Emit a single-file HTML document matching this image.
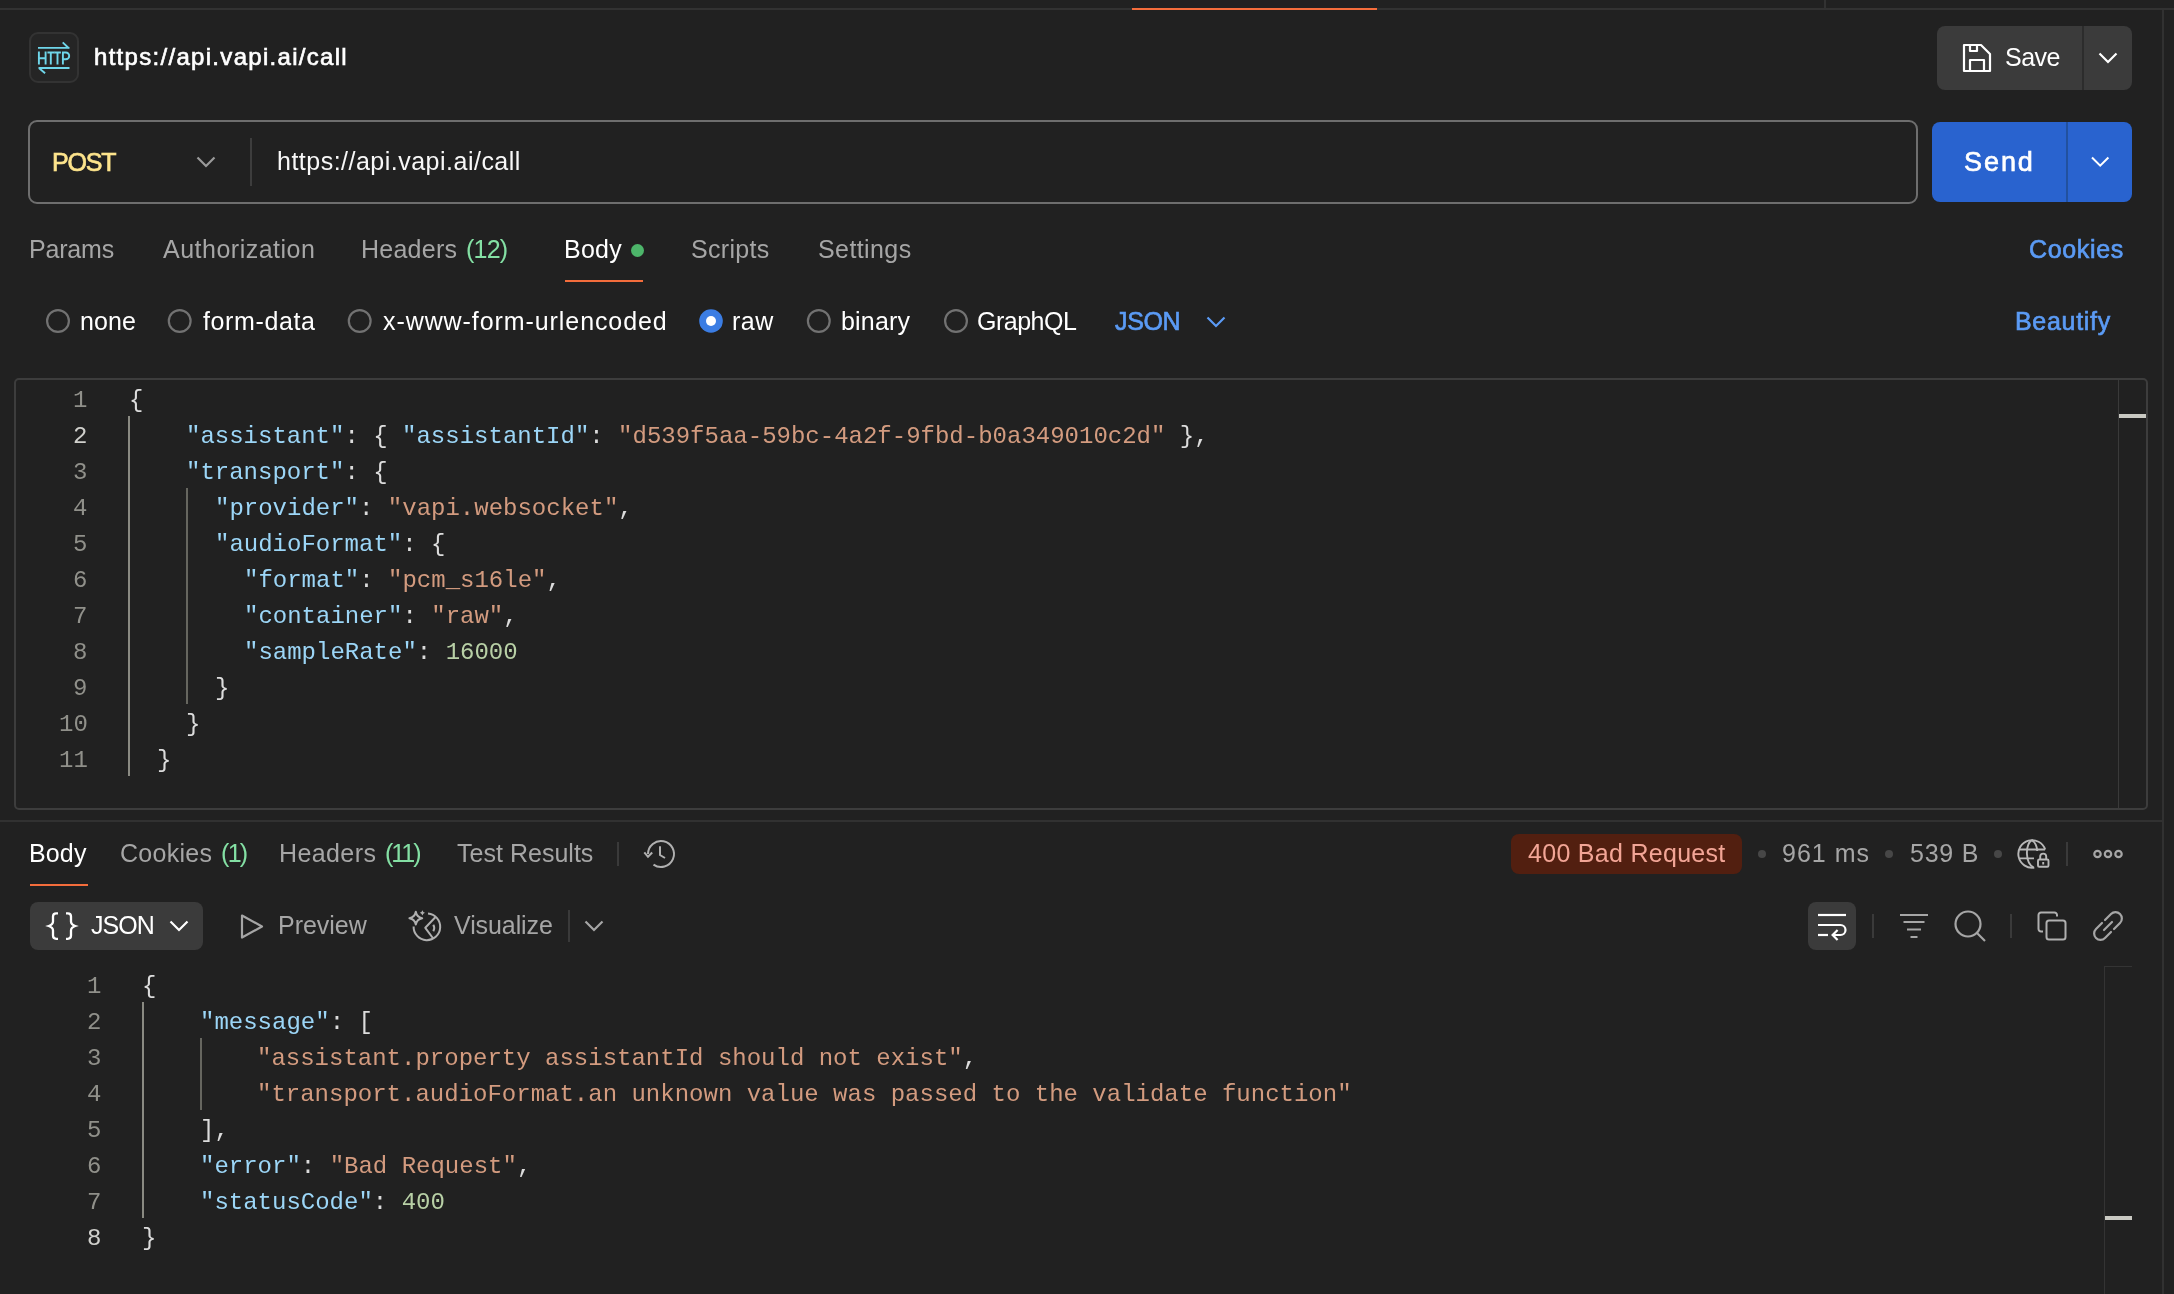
<!DOCTYPE html>
<html><head><meta charset="utf-8"><style>
html,body{margin:0;padding:0;width:2174px;height:1294px;overflow:hidden;background:#212121;}
body{position:relative;font-family:"Liberation Sans",sans-serif;}
.t{position:absolute;white-space:pre;will-change:transform;font-family:"Liberation Sans",sans-serif;}
.r{position:absolute;}
.c{position:absolute;white-space:pre;will-change:transform;font-family:"Liberation Mono",monospace;font-size:24px;line-height:36px;color:#dcdcdc;}
</style></head><body>
<div class="r" style="left:0px;top:8px;width:2174px;height:2px;background:#323232"></div>
<div class="r" style="left:1824px;top:0px;width:2px;height:8px;background:#323232"></div>
<div class="r" style="left:1132px;top:8px;width:245px;height:2px;background:#f46d3c"></div>
<div class="r" style="left:2162px;top:10px;width:2px;height:1284px;background:#313131"></div>
<div class="r" style="left:29px;top:32px;width:50px;height:51px;border:2px solid #333;border-radius:9px;box-sizing:border-box;background:#252525"></div>
<div class="t" id="t0" style="left:93.70px;top:45.38px;font-size:24px;line-height:24px;color:#ffffff;font-weight:400;letter-spacing:1.300px;-webkit-text-stroke:0.65px #ffffff;">https://api.vapi.ai/call</div>
<div class="r" style="left:1937px;top:26px;width:195px;height:64px;background:#3b3b3b;border-radius:8px"></div>
<div class="r" style="left:2082px;top:26px;width:2px;height:64px;background:#2c2c2c"></div>
<svg class="r" style="left:1962px;top:43px;" width="30" height="30" viewBox="0 0 30 30" fill="none"><g stroke="#fff" stroke-width="2.2" fill="none" stroke-linejoin="round"><path d="M2 2H19L28 11V28H2Z"/><path d="M8 2V8H15V2"/><path d="M8 28V17H22V28"/></g></svg>
<div class="t" id="t1" style="left:2004.60px;top:44.73px;font-size:25px;line-height:25px;color:#ffffff;font-weight:400;letter-spacing:-0.533px;">Save</div>
<svg class="r" style="left:2098px;top:52px;" width="20" height="12" viewBox="0 0 20 12" fill="none"><path d="M1.5 1.5L10 10L18.5 1.5" stroke="#fff" stroke-width="2.2" fill="none"/></svg>
<div class="r" style="left:28px;top:120px;width:1890px;height:84px;border:2px solid #6e6e6e;border-radius:9px;box-sizing:border-box"></div>
<div class="t" id="t2" style="left:51.60px;top:150.33px;font-size:25px;line-height:25px;color:#fde48c;font-weight:400;letter-spacing:-1.200px;-webkit-text-stroke:0.65px #fde48c;">POST</div>
<svg class="r" style="left:196px;top:156px;" width="20" height="12" viewBox="0 0 20 12" fill="none"><path d="M1.5 1.5L10 10L18.5 1.5" stroke="#9a9a9a" stroke-width="2.2" fill="none"/></svg>
<div class="r" style="left:250px;top:138px;width:2px;height:48px;background:#3d3d3d"></div>
<div class="t" id="t3" style="left:276.60px;top:149.13px;font-size:25px;line-height:25px;color:#f8f8f8;font-weight:400;letter-spacing:0.491px;">https://api.vapi.ai/call</div>
<div class="r" style="left:1932px;top:122px;width:200px;height:80px;background:#2963cf;border-radius:8px"></div>
<div class="r" style="left:2066px;top:122px;width:2px;height:80px;background:#22519f"></div>
<div class="t" id="t4" style="left:1964.00px;top:148.84px;font-size:27px;line-height:27px;color:#ffffff;font-weight:400;letter-spacing:1.933px;-webkit-text-stroke:0.65px #ffffff;">Send</div>
<div class="t" id="t5" style="left:29.00px;top:236.83px;font-size:25px;line-height:25px;color:#a6a6a6;font-weight:400;letter-spacing:-0.200px;">Params</div>
<div class="t" id="t6" style="left:163.00px;top:236.83px;font-size:25px;line-height:25px;color:#a6a6a6;font-weight:400;letter-spacing:0.500px;">Authorization</div>
<div class="t" id="t7" style="left:361.00px;top:236.83px;font-size:25px;line-height:25px;color:#a6a6a6;font-weight:400;letter-spacing:0.250px;">Headers</div>
<div class="t" id="t8" style="left:466.10px;top:236.83px;font-size:25px;line-height:25px;color:#84e0a4;font-weight:400;letter-spacing:-0.800px;">(12)</div>
<div class="t" id="t9" style="left:563.60px;top:236.83px;font-size:25px;line-height:25px;color:#ffffff;font-weight:400;letter-spacing:0.233px;">Body</div>
<div class="r" style="left:631px;top:244px;width:13px;height:13px;background:#4db56a;border-radius:50%"></div>
<div class="r" style="left:565px;top:280px;width:78px;height:2px;background:#f46d3c"></div>
<div class="t" id="t10" style="left:691.10px;top:236.83px;font-size:25px;line-height:25px;color:#a6a6a6;font-weight:400;letter-spacing:0.317px;">Scripts</div>
<div class="t" id="t11" style="left:818.10px;top:236.83px;font-size:25px;line-height:25px;color:#a6a6a6;font-weight:400;letter-spacing:0.400px;">Settings</div>
<div class="t" id="t12" style="left:2029.00px;top:236.83px;font-size:25px;line-height:25px;color:#5b9bf5;font-weight:400;letter-spacing:0.667px;-webkit-text-stroke:0.65px #5b9bf5;">Cookies</div>
<div class="t" id="t13" style="left:79.60px;top:308.83px;font-size:25px;line-height:25px;color:#ffffff;font-weight:400;letter-spacing:0.133px;">none</div>
<div class="t" id="t14" style="left:202.60px;top:308.83px;font-size:25px;line-height:25px;color:#ffffff;font-weight:400;letter-spacing:0.612px;">form-data</div>
<div class="t" id="t15" style="left:382.60px;top:308.83px;font-size:25px;line-height:25px;color:#ffffff;font-weight:400;letter-spacing:0.920px;">x-www-form-urlencoded</div>
<div class="t" id="t16" style="left:732.00px;top:308.83px;font-size:25px;line-height:25px;color:#ffffff;font-weight:400;letter-spacing:0.500px;">raw</div>
<div class="t" id="t17" style="left:840.60px;top:308.83px;font-size:25px;line-height:25px;color:#ffffff;font-weight:400;letter-spacing:0.180px;">binary</div>
<div class="t" id="t18" style="left:977.00px;top:308.83px;font-size:25px;line-height:25px;color:#ffffff;font-weight:400;letter-spacing:-0.500px;">GraphQL</div>
<div class="t" id="t19" style="left:1115.00px;top:308.83px;font-size:25px;line-height:25px;color:#5b9bf5;font-weight:400;letter-spacing:-0.333px;-webkit-text-stroke:0.65px #5b9bf5;">JSON</div>
<svg class="r" style="left:1206px;top:316px;" width="20" height="12" viewBox="0 0 20 12" fill="none"><path d="M1.5 1.5L10 10L18.5 1.5" stroke="#5b9bf5" stroke-width="2.2" fill="none"/></svg>
<div class="t" id="t20" style="left:2015.00px;top:308.83px;font-size:25px;line-height:25px;color:#5b9bf5;font-weight:400;letter-spacing:0.700px;-webkit-text-stroke:0.65px #5b9bf5;">Beautify</div>
<div class="r" style="left:14px;top:378px;width:2134px;height:432px;border:2px solid #3d3d3d;border-radius:5px;box-sizing:border-box"></div>
<div class="r" style="left:2118px;top:380px;width:1px;height:428px;background:#3a3a3a"></div>
<div class="r" style="left:2119px;top:414px;width:27px;height:4px;background:#c9c9c2"></div>
<div class="c" style="left:73.40px;top:383.00px;color:#90908a">1</div>
<div class="c" style="left:128.50px;top:383.00px"><span style="color:#dcdcdc">{</span></div>
<div class="c" style="left:73.40px;top:419.00px;color:#d0d0cc">2</div>
<div class="c" style="left:186.10px;top:419.00px"><span style="color:#9cd6f7">&quot;assistant&quot;</span><span style="color:#dcdcdc">:</span><span style="color:#dcdcdc"> </span><span style="color:#dcdcdc">{</span><span style="color:#dcdcdc"> </span><span style="color:#9cd6f7">&quot;assistantId&quot;</span><span style="color:#dcdcdc">:</span><span style="color:#dcdcdc"> </span><span style="color:#d39b7f">&quot;d539f5aa-59bc-4a2f-9fbd-b0a349010c2d&quot;</span><span style="color:#dcdcdc"> </span><span style="color:#dcdcdc">}</span><span style="color:#dcdcdc">,</span></div>
<div class="c" style="left:73.40px;top:455.00px;color:#90908a">3</div>
<div class="c" style="left:186.10px;top:455.00px"><span style="color:#9cd6f7">&quot;transport&quot;</span><span style="color:#dcdcdc">:</span><span style="color:#dcdcdc"> </span><span style="color:#dcdcdc">{</span></div>
<div class="c" style="left:73.40px;top:491.00px;color:#90908a">4</div>
<div class="c" style="left:214.90px;top:491.00px"><span style="color:#9cd6f7">&quot;provider&quot;</span><span style="color:#dcdcdc">:</span><span style="color:#dcdcdc"> </span><span style="color:#d39b7f">&quot;vapi.websocket&quot;</span><span style="color:#dcdcdc">,</span></div>
<div class="c" style="left:73.40px;top:527.00px;color:#90908a">5</div>
<div class="c" style="left:214.90px;top:527.00px"><span style="color:#9cd6f7">&quot;audioFormat&quot;</span><span style="color:#dcdcdc">:</span><span style="color:#dcdcdc"> </span><span style="color:#dcdcdc">{</span></div>
<div class="c" style="left:73.40px;top:563.00px;color:#90908a">6</div>
<div class="c" style="left:243.70px;top:563.00px"><span style="color:#9cd6f7">&quot;format&quot;</span><span style="color:#dcdcdc">:</span><span style="color:#dcdcdc"> </span><span style="color:#d39b7f">&quot;pcm_s16le&quot;</span><span style="color:#dcdcdc">,</span></div>
<div class="c" style="left:73.40px;top:599.00px;color:#90908a">7</div>
<div class="c" style="left:243.70px;top:599.00px"><span style="color:#9cd6f7">&quot;container&quot;</span><span style="color:#dcdcdc">:</span><span style="color:#dcdcdc"> </span><span style="color:#d39b7f">&quot;raw&quot;</span><span style="color:#dcdcdc">,</span></div>
<div class="c" style="left:73.40px;top:635.00px;color:#90908a">8</div>
<div class="c" style="left:243.70px;top:635.00px"><span style="color:#9cd6f7">&quot;sampleRate&quot;</span><span style="color:#dcdcdc">:</span><span style="color:#dcdcdc"> </span><span style="color:#b8d0a6">16000</span></div>
<div class="c" style="left:73.40px;top:671.00px;color:#90908a">9</div>
<div class="c" style="left:214.90px;top:671.00px"><span style="color:#dcdcdc">}</span></div>
<div class="c" style="left:59.00px;top:707.00px;color:#90908a">10</div>
<div class="c" style="left:186.10px;top:707.00px"><span style="color:#dcdcdc">}</span></div>
<div class="c" style="left:59.00px;top:743.00px;color:#90908a">11</div>
<div class="c" style="left:157.30px;top:743.00px"><span style="color:#dcdcdc">}</span></div>
<div class="r" style="left:128px;top:416px;width:2px;height:360px;background:#8a8a82"></div>
<div class="r" style="left:186px;top:488px;width:2px;height:216px;background:#66665f"></div>
<div class="r" style="left:0px;top:820px;width:2162px;height:2px;background:#313131"></div>
<div class="t" id="t21" style="left:29.00px;top:841.23px;font-size:25px;line-height:25px;color:#ffffff;font-weight:400;letter-spacing:0.133px;">Body</div>
<div class="r" style="left:30px;top:884px;width:58px;height:2px;background:#f46d3c"></div>
<div class="t" id="t22" style="left:120.40px;top:841.23px;font-size:25px;line-height:25px;color:#a6a6a6;font-weight:400;letter-spacing:0.267px;">Cookies</div>
<div class="t" id="t23" style="left:220.50px;top:841.23px;font-size:25px;line-height:25px;color:#84e0a4;font-weight:400;letter-spacing:-1.700px;">(1)</div>
<div class="t" id="t24" style="left:279.10px;top:841.23px;font-size:25px;line-height:25px;color:#a6a6a6;font-weight:400;letter-spacing:0.400px;">Headers</div>
<div class="t" id="t25" style="left:385.00px;top:841.23px;font-size:25px;line-height:25px;color:#84e0a4;font-weight:400;letter-spacing:-2.033px;">(11)</div>
<div class="t" id="t26" style="left:457.30px;top:841.23px;font-size:25px;line-height:25px;color:#a6a6a6;font-weight:400;letter-spacing:0.018px;">Test Results</div>
<div class="r" style="left:617px;top:842px;width:2px;height:24px;background:#3a3a3a"></div>
<div class="r" style="left:1511px;top:834px;width:231px;height:40px;background:#521f10;border-radius:8px"></div>
<div class="t" id="t27" style="left:1528.10px;top:841.13px;font-size:25px;line-height:25px;color:#f2a596;font-weight:400;letter-spacing:0.293px;">400 Bad Request</div>
<div class="r" style="left:1758px;top:850px;width:8px;height:8px;background:#474747;border-radius:50%"></div>
<div class="r" style="left:1885px;top:850px;width:8px;height:8px;background:#474747;border-radius:50%"></div>
<div class="r" style="left:1994px;top:850px;width:8px;height:8px;background:#474747;border-radius:50%"></div>
<div class="t" id="t28" style="left:1782.00px;top:840.63px;font-size:25px;line-height:25px;color:#a6a6a6;font-weight:400;letter-spacing:1.000px;">961 ms</div>
<div class="t" id="t29" style="left:1910.00px;top:840.63px;font-size:25px;line-height:25px;color:#a6a6a6;font-weight:400;letter-spacing:0.750px;">539 B</div>
<div class="r" style="left:2066px;top:842px;width:2px;height:24px;background:#3a3a3a"></div>
<svg class="r" style="left:2093px;top:848px;" width="30" height="12" viewBox="0 0 30 12" fill="none"><g stroke="#a6a6a6" stroke-width="2.2" fill="none"><circle cx="4.5" cy="6" r="3.2"/><circle cx="15" cy="6" r="3.2"/><circle cx="25.5" cy="6" r="3.2"/></g></svg>
<div class="r" style="left:30px;top:902px;width:173px;height:48px;background:#3b3b3b;border-radius:8px"></div>
<div class="t" id="t30" style="left:91.00px;top:913.13px;font-size:25px;line-height:25px;color:#ffffff;font-weight:400;letter-spacing:-0.933px;">JSON</div>
<svg class="r" style="left:169px;top:920px;" width="20" height="12" viewBox="0 0 20 12" fill="none"><path d="M1.5 1.5L10 10L18.5 1.5" stroke="#fff" stroke-width="2.2" fill="none"/></svg>
<svg class="r" style="left:240px;top:914px;" width="24" height="25" viewBox="0 0 24 25" fill="none"><path d="M2 1.5L22 12.5L2 23.5Z" stroke="#a6a6a6" stroke-width="2.2" fill="none" stroke-linejoin="round"/></svg>
<div class="t" id="t31" style="left:278.00px;top:912.83px;font-size:25px;line-height:25px;color:#a6a6a6;font-weight:400;letter-spacing:-0.033px;">Preview</div>
<div class="t" id="t32" style="left:453.50px;top:912.83px;font-size:25px;line-height:25px;color:#a6a6a6;font-weight:400;letter-spacing:-0.088px;">Visualize</div>
<div class="r" style="left:568px;top:910px;width:2px;height:32px;background:#3a3a3a"></div>
<svg class="r" style="left:584px;top:920px;" width="20" height="12" viewBox="0 0 20 12" fill="none"><path d="M1.5 1.5L10 10L18.5 1.5" stroke="#a6a6a6" stroke-width="2.2" fill="none"/></svg>
<div class="r" style="left:1808px;top:902px;width:48px;height:48px;background:#3b3b3b;border-radius:8px"></div>
<div class="r" style="left:1872px;top:914px;width:2px;height:24px;background:#3a3a3a"></div>
<div class="r" style="left:2010px;top:914px;width:2px;height:24px;background:#3a3a3a"></div>
<svg class="r" style="left:1898px;top:913px;" width="32" height="26" viewBox="0 0 32 26" fill="none"><g stroke="#a6a6a6" stroke-width="2.2" fill="none"><path d="M2 2H30M5.5 9H26.5M9 16.5H23M12.5 24H19.5"/></g></svg>
<svg class="r" style="left:1952px;top:908px;" width="36" height="36" viewBox="0 0 36 36" fill="none"><g stroke="#a6a6a6" stroke-width="2.2" fill="none"><circle cx="16" cy="16" r="12.5"/><path d="M25 25L33 33"/></g></svg>
<svg class="r" style="left:2036px;top:910px;" width="32" height="32" viewBox="0 0 32 32" fill="none"><g stroke="#b0b0b0" stroke-width="2" fill="none"><path d="M7 21.5H5A2.5 2.5 0 0 1 2.5 19V5A2.5 2.5 0 0 1 5 2.5H18.5A2.5 2.5 0 0 1 21 5V6.5"/><rect x="10.5" y="10.5" width="19" height="19" rx="2.5"/></g></svg>
<svg class="r" style="left:2092px;top:910px;" width="32" height="32" viewBox="0 0 32 32" fill="none"><g stroke="#a6a6a6" stroke-width="2.2" fill="none" stroke-linecap="round"><path d="M13 10L19 4A6 6 0 0 1 28 13L22 19"/><path d="M19 22L13 28A6 6 0 0 1 4 19L10 13"/><path d="M12 20L20 12"/></g></svg>
<div class="c" style="left:87.40px;top:968.60px;color:#90908a">1</div>
<div class="c" style="left:142.20px;top:968.60px"><span style="color:#dcdcdc">{</span></div>
<div class="c" style="left:87.40px;top:1004.60px;color:#90908a">2</div>
<div class="c" style="left:199.80px;top:1004.60px"><span style="color:#9cd6f7">&quot;message&quot;</span><span style="color:#dcdcdc">:</span><span style="color:#dcdcdc"> </span><span style="color:#dcdcdc">[</span></div>
<div class="c" style="left:87.40px;top:1040.60px;color:#90908a">3</div>
<div class="c" style="left:257.40px;top:1040.60px"><span style="color:#d39b7f">&quot;assistant.property assistantId should not exist&quot;</span><span style="color:#dcdcdc">,</span></div>
<div class="c" style="left:87.40px;top:1076.60px;color:#90908a">4</div>
<div class="c" style="left:257.40px;top:1076.60px"><span style="color:#d39b7f">&quot;transport.audioFormat.an unknown value was passed to the validate function&quot;</span></div>
<div class="c" style="left:87.40px;top:1112.60px;color:#90908a">5</div>
<div class="c" style="left:199.80px;top:1112.60px"><span style="color:#dcdcdc">]</span><span style="color:#dcdcdc">,</span></div>
<div class="c" style="left:87.40px;top:1148.60px;color:#90908a">6</div>
<div class="c" style="left:199.80px;top:1148.60px"><span style="color:#9cd6f7">&quot;error&quot;</span><span style="color:#dcdcdc">:</span><span style="color:#dcdcdc"> </span><span style="color:#d39b7f">&quot;Bad Request&quot;</span><span style="color:#dcdcdc">,</span></div>
<div class="c" style="left:87.40px;top:1184.60px;color:#90908a">7</div>
<div class="c" style="left:199.80px;top:1184.60px"><span style="color:#9cd6f7">&quot;statusCode&quot;</span><span style="color:#dcdcdc">:</span><span style="color:#dcdcdc"> </span><span style="color:#b8d0a6">400</span></div>
<div class="c" style="left:87.40px;top:1220.60px;color:#d0d0cc">8</div>
<div class="c" style="left:142.20px;top:1220.60px"><span style="color:#dcdcdc">}</span></div>
<div class="r" style="left:142px;top:1002px;width:2px;height:216px;background:#8a8a82"></div>
<div class="r" style="left:200px;top:1038px;width:2px;height:72px;background:#66665f"></div>
<div class="r" style="left:2104px;top:966px;width:1px;height:328px;background:#343434"></div>
<div class="r" style="left:2104px;top:966px;width:28px;height:1px;background:#343434"></div>
<div class="r" style="left:2105px;top:1216px;width:27px;height:4px;background:#c9c9c2"></div>
<svg class="r" style="left:0;top:0" width="2174" height="1294" viewBox="0 0 2174 1294" fill="none"><g stroke="#6fd6ea" stroke-width="1.9" fill="none" stroke-linecap="butt"><path d="M38 47.9H69.5M62.7 42.4L68.8 48.2"/><path d="M38.5 68H69.5M39.2 68.3L45.1 73.3"/><path d="M38.9 51.6V64.6M45.6 51.6V64.6M38.9 58.2H45.6"/><path d="M47.4 52.5H54.4M50.8 52.5V64.6"/><path d="M54.2 52.5H60.9M57.5 52.5V64.6"/><path d="M62.9 64.6V52.5H65.8A3.4 3.4 0 0 1 65.8 59.3H62.9"/></g><path d="M2092 157.5L2100.2 165.7L2108.4 157.5" stroke="#fff" stroke-width="2" fill="none"/><circle cx="58" cy="321" r="10.9" stroke="#727272" stroke-width="2.2" fill="none"/><circle cx="179.7" cy="321" r="10.9" stroke="#727272" stroke-width="2.2" fill="none"/><circle cx="359.7" cy="321" r="10.9" stroke="#727272" stroke-width="2.2" fill="none"/><circle cx="711" cy="321" r="11.8" fill="#3b7de3"/><circle cx="711" cy="321" r="5" fill="#fff"/><circle cx="818.8" cy="321" r="10.9" stroke="#727272" stroke-width="2.2" fill="none"/><circle cx="956" cy="321" r="10.9" stroke="#727272" stroke-width="2.2" fill="none"/><g stroke="#b0b0b0" stroke-width="2" fill="none"><path d="M648 854A13 13 0 1 1 653.5 864.6"/><path d="M644.3 852.3L648 856.8L652.2 852.5"/><path d="M660 846.2V855L665 858"/></g><g stroke="#b8b8b8" stroke-width="1.9" fill="none"><path d="M2045.2 849.5A13.8 13.8 0 1 0 2034.3 867.6"/><path d="M2031.9 840.1C2025 845 2025 863 2033.7 867.5"/><path d="M2031.9 840.1C2036 843 2037 847 2037.2 851"/><path d="M2019.6 849.5H2045M2019.6 858.4H2034"/><rect x="2038" y="859.5" width="10.5" height="7.3" rx="1.3"/><path d="M2040.2 859.5V856.6A2.9 2.9 0 0 1 2046.2 856.6V859.5"/><path d="M2043.2 862V864.5"/></g><g stroke="#fff" stroke-width="2.3" fill="none"><path d="M58 913.3H56.2Q53 913.3 53 916.6V921.6Q53 924.6 48.8 926Q53 927.4 53 930.4V935.6Q53 938.8 56.2 938.8H58"/><path d="M66 913.3H67.8Q71 913.3 71 916.6V921.6Q71 924.6 75.2 926Q71 927.4 71 930.4V935.6Q71 938.8 67.8 938.8H66"/></g><g stroke="#b0b0b0" stroke-width="2" fill="none" stroke-linejoin="round"><path d="M428 913.6A13.3 13.3 0 1 1 413.6 926.5"/><path d="M435.3 917.2L425.3 927.8L432.8 938"/><path d="M433.3 924.8Q435.2 928 433.3 931.2"/><path d="M415.8 911.8Q416.8 917.2 422.2 918.2Q416.8 919.2 415.8 924.6Q414.8 919.2 409.4 918.2Q414.8 917.2 415.8 911.8Z"/></g><path d="M422.4 910.2Q423 912.2 425 912.8Q423 913.4 422.4 915.4Q421.8 913.4 419.8 912.8Q421.8 912.2 422.4 910.2Z" fill="#b0b0b0"/><g stroke="#fff" stroke-width="2.2" fill="none"><path d="M1818 915H1846"/><path d="M1818 925H1840.5A5 5 0 0 1 1840.5 935H1833"/><path d="M1818 935H1828"/><path d="M1837.6 930L1832.6 935L1837.6 940"/></g></svg>
</body></html>
